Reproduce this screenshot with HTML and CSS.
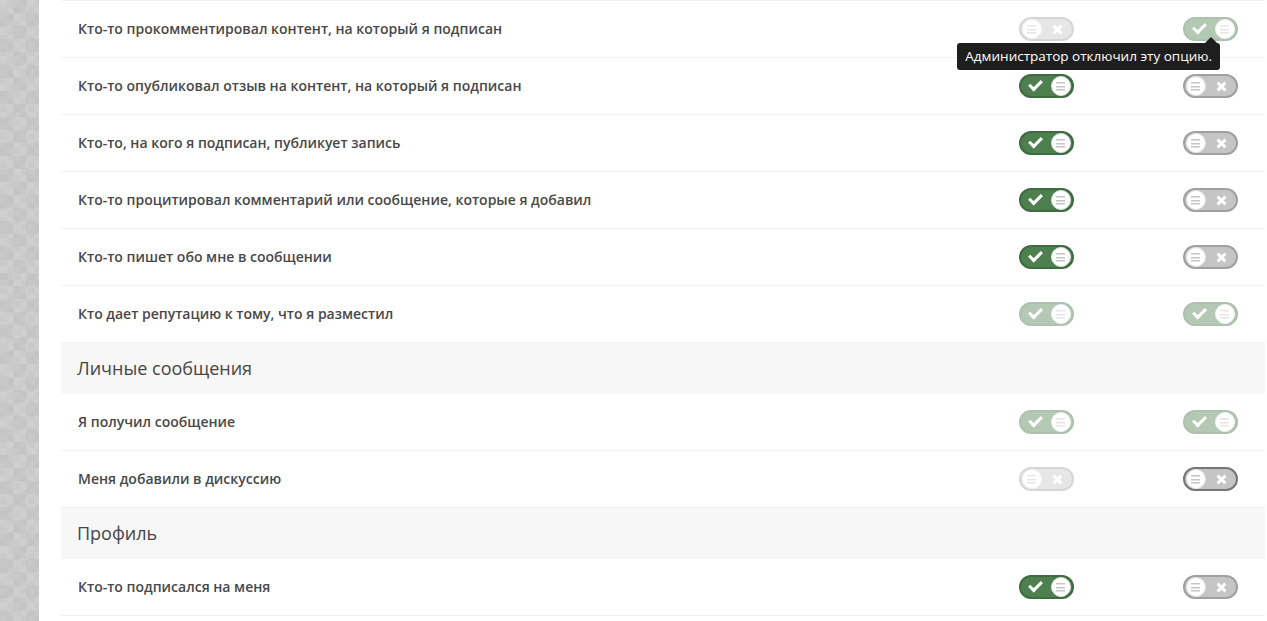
FILE: index.html
```html
<!DOCTYPE html>
<html lang="ru">
  <head>
    <meta charset="UTF-8" />
    <meta name="viewport" content="width=device-width, initial-scale=1.0" />
    <title>Настройки уведомлений</title>
    <link rel="stylesheet" href="styles.css">
  </head>
  <body>
    <div class="page">
      <div class="side"></div>
      <div class="main">
        <div class="list">

          <div class="row">
            <span class="label">Кто-то прокомментировал контент, на который я подписан</span>
            <div class="cell"><span class="toggle off disabled"><span class="knob"></span><span class="mark x"></span></span></div>
            <div class="cell">
              <span class="toggle on disabled"><span class="mark check"></span><span class="knob"></span></span>
              <div class="tip">Администратор отключил эту опцию.</div>
            </div>
          </div>

          <div class="row">
            <span class="label">Кто-то опубликовал отзыв на контент, на который я подписан</span>
            <div class="cell"><span class="toggle on"><span class="mark check"></span><span class="knob"></span></span></div>
            <div class="cell"><span class="toggle off"><span class="knob"></span><span class="mark x"></span></span></div>
          </div>

          <div class="row">
            <span class="label">Кто-то, на кого я подписан, публикует запись</span>
            <div class="cell"><span class="toggle on"><span class="mark check"></span><span class="knob"></span></span></div>
            <div class="cell"><span class="toggle off"><span class="knob"></span><span class="mark x"></span></span></div>
          </div>

          <div class="row">
            <span class="label">Кто-то процитировал комментарий или сообщение, которые я добавил</span>
            <div class="cell"><span class="toggle on"><span class="mark check"></span><span class="knob"></span></span></div>
            <div class="cell"><span class="toggle off"><span class="knob"></span><span class="mark x"></span></span></div>
          </div>

          <div class="row">
            <span class="label">Кто-то пишет обо мне в сообщении</span>
            <div class="cell"><span class="toggle on"><span class="mark check"></span><span class="knob"></span></span></div>
            <div class="cell"><span class="toggle off"><span class="knob"></span><span class="mark x"></span></span></div>
          </div>

          <div class="row">
            <span class="label">Кто дает репутацию к тому, что я разместил</span>
            <div class="cell"><span class="toggle on disabled"><span class="mark check"></span><span class="knob"></span></span></div>
            <div class="cell"><span class="toggle on disabled"><span class="mark check"></span><span class="knob"></span></span></div>
          </div>

          <div class="section">Личные сообщения</div>

          <div class="row">
            <span class="label">Я получил сообщение</span>
            <div class="cell"><span class="toggle on disabled"><span class="mark check"></span><span class="knob"></span></span></div>
            <div class="cell"><span class="toggle on disabled"><span class="mark check"></span><span class="knob"></span></span></div>
          </div>

          <div class="row">
            <span class="label">Меня добавили в дискуссию</span>
            <div class="cell"><span class="toggle off disabled"><span class="knob"></span><span class="mark x"></span></span></div>
            <div class="cell"><span class="toggle off hover"><span class="knob"></span><span class="mark x"></span></span></div>
          </div>

          <div class="section">Профиль</div>

          <div class="row">
            <span class="label">Кто-то подписался на меня</span>
            <div class="cell"><span class="toggle on"><span class="mark check"></span><span class="knob"></span></span></div>
            <div class="cell"><span class="toggle off"><span class="knob"></span><span class="mark x"></span></span></div>
          </div>

        </div>
      </div>
    </div>
  </body>
</html>
```

FILE: styles.css
```css
body {
  margin: 0;
  font-family: "Open Sans", "Liberation Sans", sans-serif;
  color: #505050;
  background: #fff;
}
.page {
  display: flex;
  min-height: 621px;
  overflow: hidden;
}
.side {
  width: 39px;
  flex-shrink: 0;
  background-color: #ebebeb;
  background-image:
    repeating-conic-gradient(#e7e7e7 0 25%, #efefef 0 50%),
    repeating-conic-gradient(#eaeaea 0 25%, #f0f0f0 0 50%);
  background-size: 26px 26px, 14px 14px;
  background-blend-mode: multiply;
}
.main {
  flex: 1;
  padding: 0 2px 0 22px;
}
.list {
  border-top: 1px solid #f3f3f3;
}
.row {
  display: grid;
  grid-template-columns: 1fr 110px 110px;
  column-gap: 54px;
  align-items: center;
  height: 54px;
  padding-bottom: 2px;
  border-bottom: 1px solid #f1f1f1;
  padding-left: 17px;
}
.label {
  font-size: 14px;
  font-weight: 600;
  color: #484848;
}
.section {
  background: #f7f7f7;
  height: 51px;
  line-height: 50px;
  padding-left: 16px;
  font-size: 18px;
  color: #454545;
}
.cell {
  position: relative;
  display: flex;
  justify-content: center;
  padding-top: 2px;
}
.toggle {
  box-sizing: border-box;
  width: 55px;
  height: 24px;
  border-radius: 12px;
  border: 2px solid;
  display: flex;
  align-items: center;
  justify-content: space-between;
  padding: 0 1px;
}
.toggle.on {
  background: #4e7f4f;
  border-color: #3f6b40;
}
.toggle.off {
  background: #c5c5c5;
  border-color: #a0a0a0;
}
.toggle.off.hover {
  border-color: #767676;
}
.toggle.disabled {
  opacity: 0.42;
}
.knob {
  box-sizing: border-box;
  width: 20px;
  height: 20px;
  border-radius: 50%;
  background: #fff;
  border: 1px solid #e2e2e2;
  background-image: linear-gradient(#c4c4c4, #c4c4c4), linear-gradient(#c4c4c4, #c4c4c4), linear-gradient(#c4c4c4, #c4c4c4);
  background-size: 9px 1.5px;
  background-repeat: no-repeat;
  background-position: center 5px, center 8.5px, center 12px;
}
.mark {
  width: 19px;
  height: 19px;
  display: flex;
  align-items: center;
  justify-content: center;
  margin: 0 4px;
}
.mark.check::before {
  content: "";
  width: 10px;
  height: 5px;
  border-left: 3px solid #fff;
  border-bottom: 3px solid #fff;
  transform: translateY(-2px) rotate(-45deg);
}
.mark.x {
  position: relative;
}
.mark.x::before,
.mark.x::after {
  content: "";
  position: absolute;
  width: 11px;
  height: 3px;
  background: #fff;
  transform: rotate(45deg);
}
.mark.x::after {
  transform: rotate(-45deg);
}
.tip {
  position: absolute;
  top: 28px;
  right: 45px;
  white-space: nowrap;
  background: #1e1e1e;
  color: #fff;
  font-size: 13.5px;
  line-height: 27px;
  padding: 0 8px;
  border-radius: 3px;
  z-index: 2;
}
.tip::before {
  content: "";
  position: absolute;
  top: -6px;
  right: 3px;
  border: 6px solid transparent;
  border-top: 0;
  border-bottom-color: #1e1e1e;
}
```
